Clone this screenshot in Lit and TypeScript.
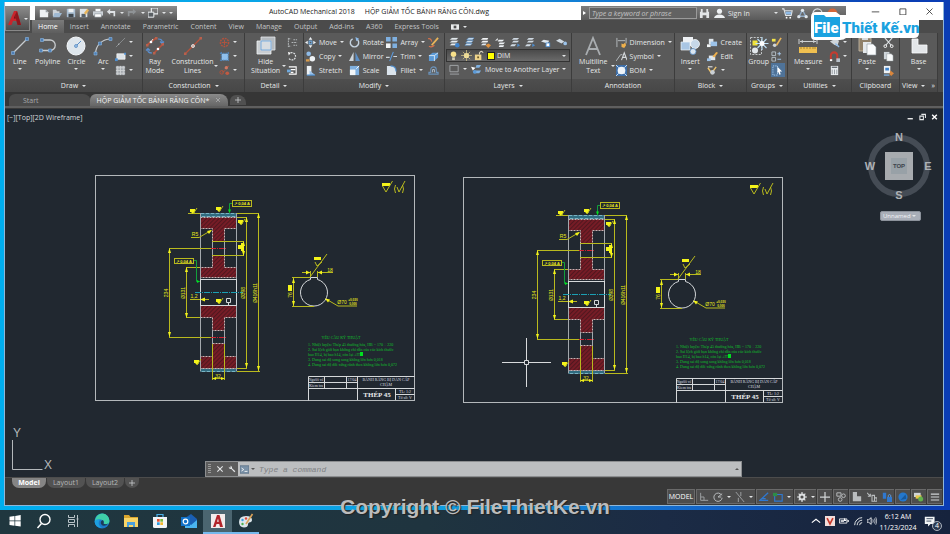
import { LitElement, html, svg, css, nothing, SVGTemplateResult, TemplateResult } from "lit";
import { customElement } from "lit/decorators.js";

const R = "#b5523c";
const B = "#6fa8dc";
const Y = "#f0c050";

/* Glyphs drawn on a 20 x 20 grid */
const big: Record<string, SVGTemplateResult> = {
  line: svg`<path d="M3 17L17 3" stroke="#c9cdd0" stroke-width="1.2"/><path d="M1.500 15.500h3v3h-3zM15.500 1.500h3v3h-3z" fill="#4f7fb5" stroke="#8cb8e4" stroke-width=".6"/>`,
  polyline: svg`<path d="M4 4h8a5 5 0 0 1 0 10.500H3" fill="none" stroke="#c9cdd0" stroke-width="1.300"/><path d="M2.500 2.500h3v3h-3zM1.500 13h3v3h-3zM10.500 13h3v3h-3z" fill="#4f7fb5" stroke="#8cb8e4" stroke-width=".6"/>`,
  circle: svg`<circle cx="10" cy="10" r="9" fill="#dfe6ec" stroke="#f6f8fa"/><path d="M10 10l5-5" stroke="#5b8fc9"/><circle cx="10" cy="10" r="1.500" fill="#9cc3ea" stroke="#3c74b4" stroke-width=".6"/>`,
  arc: svg`<path d="M2.500 17.500C3 9 9 3 18 3" fill="none" stroke="#c9cdd0" stroke-width="1.200"/><path d="M1 16h3v3h-3zM5.500 6h3v3h-3zM16 1.500h3v3h-3z" fill="#4f7fb5" stroke="#8cb8e4" stroke-width=".6"/>`,
  ray: svg`<path d="M2 9L11 2M9 17L18 8" stroke="${R}" stroke-width="1.600"/><path d="M5 7L8 3" stroke="#ddd"/><path d="M13 3q5 0 4 4M15 5.500l2 2 2-2M7 17q-5 0-4-4M1 14.500l2-2 2 2" fill="none" stroke="#5b8fd0" stroke-width="1.200"/><path d="M1 8h2.500v2.500H1zM10 1h2.500v2.500H10zM8 16h2.500v2.500H8zM16.500 7H19v2.500h-2.500z" fill="#b9604c"/><circle cx="6" cy="6" r="1.300" fill="#fff"/><circle cx="13" cy="13" r="1.300" fill="#fff"/>`,
  xline: svg`<path d="M2 18L18 2" stroke="${R}" stroke-width="1.200"/><path d="M1 16.500h2.500V19H1zM16.500 1H19v2.500h-2.500z" fill="#b9604c"/><circle cx="10" cy="10" r="1.500" fill="#c8a39a" stroke="#fff" stroke-width=".7"/>`,
  hide: svg`<path d="M5 1h14v13H5z" fill="#b4babf" stroke="#e6e9eb" stroke-width=".8"/><path d="M1 5h14v13H1z" fill="#dde2e6" fill-opacity=".85" stroke="#f3f5f6" stroke-width=".8"/><path d="M5 5h10v9H5z" fill="none" stroke="#5b9bd8" stroke-width=".8"/>`,
  mtext: svg`<path d="M3 19L10 2l7 17M5.500 13h9" fill="none" stroke="#a9adb0" stroke-width="1.800"/>`,
  insert: svg`<path d="M3 1h10v9H3z" fill="#eef1f4"/><path d="M1 14V6h9v8z" fill="#a9c6e4" stroke="#eef3f8" stroke-width=".7"/><circle cx="15" cy="8" r="4.500" fill="#c6d7e8" stroke="#f4f6f8" stroke-width=".8"/><circle cx="13" cy="15.500" r="3" fill="#dbe6f0" stroke="#5b8fc9" stroke-width=".8"/>`,
  group: svg`<path d="M1.500 1.500h11v17h-11z" fill="none" stroke="#cfd2d4" stroke-width=".9" stroke-dasharray="2 1.200"/><path d="M3.500 4.500h5v5h-5z" fill="#efe33a"/><circle cx="6" cy="14.500" r="3" fill="#e3e8ec"/><path d="M13 1v13M6.500 7.500h13M8.500 3l9 9M17.500 3l-9 9" stroke="#bfe3fa" stroke-width="1.100"/><circle cx="13" cy="7.500" r="2.500" fill="#fff"/>`,
  measure: svg`<path d="M1 11h18v6H1z" fill="${Y}"/><path d="M3 11v2M6 11v2M9 11v2M12 11v2M15 11v2M17 11v2" stroke="#8a6a20" stroke-width=".7"/><path d="M1 3v5M19 3v5M2 5.500h16" stroke="#cdd1d4" stroke-width="1"/><path d="M2 5.500l3-1.500v3zM18 5.500l-3-1.500v3z" fill="#cdd1d4"/>`,
  paste: svg`<path d="M2 2h12v13H2z" fill="#8f8069" stroke="#c9bda8" stroke-width=".8"/><path d="M5 0h6v4H5z" fill="#d6dadd"/><path d="M6 6h8v11H6z" fill="#e4e8eb"/><path d="M10 8h6l3 3v8h-9z" fill="#fbfcfd" stroke="#8c949a" stroke-width=".6"/>`,
  base: svg`<path d="M3 3h6v6h9v8H3z" fill="#e3e6e9" stroke="#fafbfc" stroke-width=".8"/>`,
};

/* Glyphs drawn on a 12 x 12 grid */
const small: Record<string, SVGTemplateResult> = {
  ray1: svg`<path d="M1 11L11 1" stroke="#8b8e90" stroke-width="1"/><circle cx="4" cy="8" r=".8" fill="#b7babc"/>`,
  rect: svg`<path d="M2 3h9v6H2z" fill="#dce2e7" stroke="#fff" stroke-width=".7"/><path d="M0 8h3v3H0z" fill="#4f8fd0"/><path d="M10 2h2v2h-2z" fill="#4f8fd0"/>`,
  hatch: svg`<path d="M1 1h10v10H1z" fill="#a3a8ac"/><path d="M1 3h10M1 6h10M1 9h10M3 1v10M6 1v10M9 1v10" stroke="#d2d5d7" stroke-width=".9"/>`,
  cring: svg`<circle cx="6" cy="6" r="4.500" fill="none" stroke="${R}" stroke-width="1.600" stroke-dasharray="2 1"/><path d="M6 3v6M3 6h6" stroke="${R}"/>`,
  crect: svg`<path d="M3 3h7v7H3z" fill="#8fc0ee"/><path d="M1 2.500h10M1 10h10M2.500 1v10M10 1v10" stroke="#4f8fd0" stroke-width="1" stroke-dasharray="2 1"/>`,
  cdots: svg`<path d="M6 4l5-3M3 8l4-2" stroke="${R}"/><circle cx="8" cy="3" r="1.800" fill="#d07a64"/><circle cx="3" cy="8" r="2" fill="none" stroke="${R}"/><circle cx="9" cy="9" r="2" fill="#c25a42"/>`,
  d1: svg`<path d="M1.500 1v10M1.500 2h3M1.500 10h3M5 6h6M7 3h4M7 9h4" stroke="#b9bdc0" stroke-width="1" stroke-dasharray="2 .8"/>`,
  d2: svg`<path d="M4 2a4 4 0 1 1-2 6" fill="none" stroke="#dfe2e4" stroke-width="1.300" stroke-dasharray="2 1"/><path d="M1 1l3 1-2 3z" fill="#fff"/>`,
  d3: svg`<path d="M2 2h8v8H2M4 5h5M4 8h3" fill="none" stroke="#fff" stroke-width="1.200"/><path d="M0 5h4v3H0z" fill="${B}"/>`,
  move: svg`<path d="M6 0l2 3H4zM6 12l2-3H4zM0 6l3-2v4zM12 6l-3-2v4z" fill="#eef2f5"/><path d="M4.500 4.500h3v3h-3z" fill="none" stroke="${B}" stroke-width="1.200"/>`,
  copy: svg`<circle cx="4" cy="3" r="2.500" fill="#8ebbe8"/><circle cx="8" cy="8.500" r="3" fill="#eef2f5"/><path d="M1 9h4v2.500H1z" fill="#d99c4c"/>`,
  stretch: svg`<path d="M2 1h5v10H2z" fill="#eef2f5"/><path d="M5 6l6 5H5z" fill="#9cc3ea"/><path d="M2 11h9" stroke="#4f8fd0" stroke-width="1.300"/>`,
  rotate: svg`<path d="M4 2a4.600 4.600 0 1 0 4 0" fill="none" stroke="#c5d3e0" stroke-width="1.500"/><path d="M7 0l4 2-3 2.500z" fill="#8ebbe8"/>`,
  mirror: svg`<path d="M5 1v10H0z" fill="#cfd6dc"/><path d="M7 1v10h5z" fill="#5c8fc6"/>`,
  scale: svg`<path d="M1 1h10v10H1z" fill="#7fb0e0"/><path d="M1 5h6v6H1z" fill="#f2f5f7"/><path d="M8 4l3-3" stroke="#fff"/>`,
  array: svg`<path d="M0 0h5v5H0zM7 0h5v5H7zM7 7h5v5H7z" fill="#7fb0e0"/><path d="M0 7h5v5H0z" fill="#f2f5f7"/>`,
  trim: svg`<path d="M0 7h4M8 6h4" stroke="#cfd6dc" stroke-width="1.200"/><path d="M4 11L8 1" stroke="#5c9be0" stroke-width="1.200"/>`,
  fillet: svg`<path d="M1 1h4q6 0 6 6v4H1z" fill="#dbe4ec"/><path d="M5 1q6 0 6 6" fill="none" stroke="#4f8fd0" stroke-width="1.200"/>`,
  erase: svg`<path d="M11 1L4 9" stroke="#e8b45a" stroke-width="2"/><path d="M0 2q3-1 4 3M1 10q3 2 6-1" fill="none" stroke="#d9734a" stroke-width="1.200"/>`,
  box: svg`<path d="M1 5l4-3h6v5l-4 4H1z" fill="#5c9bd8"/><path d="M1 5h6v6M7 5l4-3" fill="none" stroke="#e6f0fa" stroke-width=".9"/>`,
  offset: svg`<path d="M1 10V8h2V5a3 3 0 0 1 6 0v3h2v2z" fill="none" stroke="#6b93bb" stroke-width="1.200"/><path d="M5 8V5h2v3" fill="none" stroke="#b7c5d3"/>`,
  layerA: svg`<path d="M3 1h7l-2 2H1zM3 4h7L8 6H1zM3 7h7L8 9H1z" fill="#eef2f5" stroke="#9aa3aa" stroke-width=".4"/><circle cx="9" cy="9" r="2.500" fill="#3f83cc"/>`,
  layerB: svg`<path d="M5 1h6L9 3H3zM4 4h6L8 6H2zM3 7h6L7 9H1z" fill="#dfe7ee" stroke="#5c9bd8" stroke-width=".6"/>`,
  layerC: svg`<path d="M3 1h6L8 3H1zM3 4h6L8 6H1z" fill="#f1f3f5"/><path d="M3 7h4L6 9H1z" fill="#dfe7ee"/><path d="M6 9l3-2 3 2-3 3z" fill="#e0913c"/>`,
  layerD: svg`<path d="M3 1L0 4l3-.5zM4 3h6L8 5H3zM5 6h6L9 8H4zM5 9h5l-1 2H4z" fill="#eef2f5"/>`,
  layerE: svg`<path d="M4 1h6L8 3H2zM4 4h6L8 6H2zM2 8h5L5 10H0z" fill="#cfd9e2"/><path d="M8 7l3 2-3 2z" fill="#4f8fd0"/>`,
  layerF: svg`<path d="M0 5l3-2 6 1-2 3z" fill="#dfe7ee"/><path d="M5 6h5v5H5z" fill="#4f8fd0"/><path d="M6 7h3v3H6z" fill="#fff"/>`,
  layerG: svg`<path d="M0 4l4-2 5 3-3 2z" fill="#cfd9e2"/><circle cx="10" cy="7" r="2" fill="#9cc3ea"/>`,
  square: svg`<path d="M1 1.500h9v7H1zM1 11h10" fill="none" stroke="#a5a9ac"/>`,
  tolayer: svg`<path d="M0 3l5 1-3 3z" fill="#fff"/><path d="M6 1h5L9 4H5zM5 7h6l-2 3H4z" fill="#7fb0e0"/><circle cx="4" cy="8.500" r="2" fill="#5c9bd8"/>`,
  bulb: svg`<circle cx="6" cy="4.500" r="3" fill="#f8e08a"/><path d="M4.500 8h3v3h-3z" fill="#d4cfb8"/>`,
  sun: svg`<circle cx="6" cy="6" r="2.800" fill="#f6e6a8"/><path d="M6 0v12M0 6h12M2 2l8 8M10 2l-8 8" stroke="#e8d48a" stroke-width=".7"/>`,
  lock: svg`<path d="M1 5h7v6H1z" fill="#eed48c"/><path d="M6 5V3q2-3 4 0" fill="none" stroke="#d6d0bc" stroke-width="1.200"/><path d="M3.500 7h2v2h-2z" fill="#6b5a2c"/>`,
  dim: svg`<path d="M1 1v10M11 1v6M2 4h8" stroke="#b9bec2" stroke-width="1"/><path d="M6 7l2 1 2-2 1 3-2 3-3-1z" fill="#efb04c"/>`,
  sym: svg`<path d="M0 11L5 4h2" fill="none" stroke="#b9bec2"/><path d="M6 10l3-8 3 8M7 7h4" fill="none" stroke="#d6dadd" stroke-width="1.200"/>`,
  bom: svg`<path d="M0 0h12v12H0z" fill="#3d6ea8"/><circle cx="6" cy="6" r="4.200" fill="#eef3f8"/><path d="M0 0l3 3M12 0L9 3M0 12l3-3M12 12L9 9" stroke="#cfe2f5"/>`,
  create: svg`<path d="M2 2h5v6H2z" fill="#dfe6ec"/><path d="M4 5h7v5H4z" fill="#9cc3ea"/><path d="M0 8h4v3H0z" fill="#f2f5f7"/>`,
  edit: svg`<path d="M2 5h7v5H2z" fill="#dfe6ec"/><path d="M0 8h4v3H0z" fill="#9cc3ea"/><path d="M6 6l4-5 2 1-4 5z" fill="#efb04c"/>`,
  attr: svg`<path d="M1 3l4 6 5-7" fill="none" stroke="#efc36a" stroke-width="1.500"/><circle cx="6" cy="8" r="2.500" fill="#c9cfd4"/><path d="M1 2h5" stroke="#fff"/>`,
  g1: svg`<path d="M1 2h4v3H1z" fill="#f2e34a"/><circle cx="4" cy="9" r="2" fill="#cfd5da"/><path d="M11 1L6 9" stroke="#e8b45a" stroke-width="1.800"/>`,
  g2: svg`<path d="M1 1h4v4H1zM1 7h4v4H1z" fill="none" stroke="#b8c2cb"/><path d="M7 3h4M9 1v4M7 9h4" stroke="#a9cdf0"/>`,
  g3: svg`<path d="M1 1h5v10H1z" fill="none" stroke="#a9cdf0" stroke-dasharray="1.500 1"/><path d="M6 2l5 5H8.500l1 3-1.500.5-1-3L6 9z" fill="#fff"/>`,
  util1: svg`<path d="M1 5l6-3 4 2-2 6-4-2z" fill="#cfd5da"/><path d="M7 7l4 4" stroke="#8ebbe8" stroke-width="1.500"/>`,
  magnet: svg`<path d="M2 9V5a3.500 3.500 0 0 1 7 0v5" fill="none" stroke="#c23c30" stroke-width="2.200"/><path d="M1 9h2.500v2H1z" fill="#fff"/><path d="M8 8h4v4H8z" fill="#b8c2cb"/>`,
  calc: svg`<path d="M2 1h8v10H2z" fill="#e8ecef"/><path d="M3 2.500h6" stroke="#6b7278" stroke-width="1.500"/><path d="M3.500 5v5M6 5v5M8.500 5v5" stroke="#7d848a" stroke-width=".8"/>`,
  cut: svg`<path d="M2 1l7 8M10 1L3 9" stroke="#dfe3e6" stroke-width="1.200"/><circle cx="2.500" cy="10" r="1.500" fill="none" stroke="#fff"/><circle cx="9.500" cy="10" r="1.500" fill="none" stroke="#fff"/>`,
  copyc: svg`<path d="M1 1h6v8H1z" fill="#cfd5da"/><path d="M4 3h5l2 2v6H4z" fill="#f7f9fa" stroke="#858c92" stroke-width=".5"/>`,
  match: svg`<path d="M1 1h7v8H1z" fill="#eef2f5"/><path d="M2.500 3h4v3h-4z" fill="#3f83cc"/><path d="M1 11h6" stroke="#7fb0e0" stroke-width="1.500"/><path d="M8 6l4 3-3 3-2-2z" fill="#d9863c"/>`,
  newf: svg`<path d="M1 2h7l3 3v6H1z" fill="#eef1f3"/><path d="M8 2v3h3" fill="#9aa2a8"/>`,
  open: svg`<path d="M1 2h4l1 2h3v6H1z" fill="#cdd3d8"/><path d="M3 6h9l-3 5H1z" fill="#9fb9d2"/>`,
  save: svg`<path d="M1 1h10v10H1z" fill="#a9bed2"/><path d="M3 1h6v4H3z" fill="#eef1f3"/><path d="M3 7h6v4H3z" fill="#41484e"/>`,
  saveas: svg`<path d="M1 1h9v10H1z" fill="#dfe4e8"/><path d="M3 7h5v4H3z" fill="#59626a"/><path d="M6 6l4-5 2 2-4 5z" fill="#e8b45a"/>`,
  print: svg`<path d="M3 1h6v3H3z" fill="#f7f9fa"/><path d="M0 4h12v5H0z" fill="#cdd3d8"/><path d="M2 7h8v4H2z" fill="#fff" stroke="#7b8288" stroke-width=".6"/>`,
  undo: svg`<path d="M5 1L1 4.500 5 8V6h4v4h2V3.500H5z" fill="#dfe3e6"/>`,
  redo: svg`<path d="M7 1l4 3.500L7 8V6H3v4H1V3.500h6z" fill="#8f9396"/>`,
  pages: svg`<path d="M4 0h8v7H4z" fill="none" stroke="#eceff1" stroke-width="1.400"/><path d="M0 5h7v6H0z" fill="#5a5f63" stroke="#eceff1" stroke-width="1.200"/>`,
  binoc: svg`<path d="M1 4h3v7H1zM8 4h3v7H8zM2 1h2v3H2zM8 1h2v3H8zM4 5h4v3H4z" fill="#e3e6e8"/>`,
  user: svg`<circle cx="6" cy="3.500" r="2.800" fill="#eef1f3"/><path d="M0 11q1-4 6-4t6 4z" fill="#eef1f3"/>`,
  cart: svg`<path d="M0 1h2l2 7h6l1-5H3" fill="none" stroke="#dfe3e6" stroke-width="1.300"/><path d="M4 4h6v3H4z" fill="#8ebbe8"/><circle cx="5" cy="10.500" r="1" fill="#fff"/><circle cx="9" cy="10.500" r="1" fill="#fff"/>`,
  exch: svg`<path d="M6 2L2 10M6 2l4 8M3 9h6" stroke="#8fa9c4" stroke-width="1.500"/><circle cx="6" cy="2.500" r="1.800" fill="#dfe6ec"/><circle cx="2" cy="9.500" r="1.800" fill="#dfe6ec"/><circle cx="10" cy="9.500" r="1.800" fill="#dfe6ec"/>`,
  help: svg`<circle cx="6" cy="6" r="5" fill="none" stroke="#dfe3e6" stroke-width="1.200"/>`,
  alert: svg`<circle cx="6" cy="6" r="5.500" fill="#d4673a"/>`,
  camera: svg`<path d="M0 2h12v8H0z" fill="#e9ebec"/><path d="M4 4h4v4H4z" fill="#4d4d4d"/>`,
  wmin: svg`<path d="M1 6.500h10" stroke="#222"/>`,
  wmax: svg`<path d="M2.500 2.500h8v8h-8z" fill="none" stroke="#222"/>`,
  wclose: svg`<path d="M2 2l8 8M10 2l-8 8" stroke="#222"/>`,
  dmin: svg`<path d="M1 9h9" stroke="#fff" stroke-width="2.200"/>`,
  drest: svg`<path d="M4 1.500h7v6M1.500 4.500h6v6h-6z" fill="none" stroke="#e8eaec" stroke-width="1.800"/>`,
  dclose: svg`<path d="M2 2l8 8M10 2l-8 8" stroke="#fff" stroke-width="2.400"/>`,
  x: svg`<path d="M2 2l8 8M10 2l-8 8" stroke="#e4e6e8" stroke-width="1.600"/>`,
  wrench: svg`<path d="M1 2.500q0 4 4 3.500l4.500 5 1.500-1.500L6 5Q6.500 1 3 1l1.500 2L3 4z" fill="#e4e6e8"/>`,
  prompt: svg`<path d="M0 1h12v10H0z" fill="#7b92a8" stroke="#5a6f84"/><path d="M2 4l3 2-3 2M6 8.500h4" fill="none" stroke="#fff" stroke-width="1.100"/>`,
  snapL: svg`<path d="M2 1v9h9M2 6h4v4" fill="none" stroke="#9b9ea0" stroke-width="1.200"/>`,
  polar: svg`<path d="M10.500 4A5 5 0 1 0 11 7M6 6l5-4M6 6h4" fill="none" stroke="#b5b8ba" stroke-width="1.200"/>`,
  iso: svg`<path d="M1 0l10 12M7 0v5M4 7v5" stroke="#9b9ea0" stroke-width="1.200"/>`,
  angle: svg`<path d="M11 1L1 10h10M3 8h5" fill="none" stroke="#2f78d0" stroke-width="1.500"/>`,
  osnap: svg`<path d="M2 3h9v8H2z" fill="none" stroke="#2f78d0" stroke-width="1.400"/><path d="M0 1h5v4H0z" fill="#2d8c46"/>`,
  gear: svg`<circle cx="6" cy="6" r="3" fill="none" stroke="#dcdfe1" stroke-width="2.200"/><path d="M6 0v3M6 9v3M0 6h3M9 6h3M2 2l2 2M8 8l2 2M10 2L8 4M4 8l-2 2" stroke="#dcdfe1" stroke-width="1.400"/>`,
  plus: svg`<path d="M6 0v12M0 6h12" stroke="#d0d3d5" stroke-width="1.500"/>`,
  iso2: svg`<path d="M1 1h5v4H1z" fill="none" stroke="#b5b8ba" stroke-width="1.200"/><circle cx="9" cy="4.500" r="2.200" fill="none" stroke="#b5b8ba" stroke-width="1.200"/><circle cx="5" cy="9" r="2.200" fill="none" stroke="#b5b8ba" stroke-width="1.200"/>`,
  blocks: svg`<path d="M1 0h5v11H1zM6 5h5v6H6z" fill="#b9bcbe"/>`,
  blocks2: svg`<path d="M0 1l4 4M4 2v3H1M6 4h3v7H6zM9 7h3v4H9z" fill="none" stroke="#b9bcbe" stroke-width="1.300"/>`,
  lockb: svg`<path d="M1 1h4v7H1zM6 6h6v6H6z" fill="#2f78d0"/><path d="M7.500 6V4q1.500-2 3 0v2" fill="none" stroke="#5c9be0" stroke-width="1.200"/>`,
  perf: svg`<circle cx="6" cy="6" r="5.500" fill="#2477cc"/><path d="M3 9.500L9 3l1 5z" fill="#17589c"/>`,
  hw: svg`<path d="M0 1h8v5H0z" fill="#cfd3d6"/><path d="M2 4h7v4H2z" fill="#e8c84a"/><circle cx="8" cy="8.500" r="3" fill="#62b04c"/>`,
  menu: svg`<path d="M1 2.500h10M1 6h10M1 9.500h10" stroke="#d0d3d5" stroke-width="1.300"/>`,
  up: svg`<path d="M1 8l5-4 5 4" fill="none" stroke="#fff" stroke-width="1.400"/>`,
  vkey: svg`<path d="M0 0h12v12H0z" fill="#f2dedb"/><path d="M2.500 2.500L6 9.500l3.500-7" fill="none" stroke="#c8392c" stroke-width="2"/>`,
  batt: svg`<path d="M.5 3.500h9v5h-9z" fill="none" stroke="#fff"/><path d="M2 5h4v2H2zM10 5h2v2h-2z" fill="#fff"/><path d="M6 2l3 4H6z" fill="#fff"/>`,
  wifi: svg`<path d="M2 11a9 9 0 0 1 9-9M5 11a6 6 0 0 1 6-6M8 11a3 3 0 0 1 3-3" fill="none" stroke="#dfe3e6" stroke-width="1.200"/>`,
  vol: svg`<path d="M0 4.500h2L5 2v8L2 7.500H0z" fill="none" stroke="#fff"/><path d="M7 4q1 2 0 4M9 3q1.500 3 0 6M10.500 1.500q2.500 4.500 0 9" fill="none" stroke="#fff" stroke-width=".8"/>`,
};

/* Glyphs drawn on a 16 x 16 grid, for the system bar */
const task: Record<string, SVGTemplateResult> = {
  start: svg`<path d="M2.500 3.700l5-.7v4.500h-5zM8.200 2.900l5.500-.8v5.400H8.200zM2.500 8.200h5v4.500l-5-.7zM8.200 8.200h5.500v5.400l-5.500-.8z" fill="#fff"/>`,
  search: svg`<circle cx="9" cy="6.500" r="5" fill="none" stroke="#fff" stroke-width="1.400"/><path d="M5.500 10.500L1.500 15" stroke="#fff" stroke-width="1.500"/>`,
  tview: svg`<path d="M3.500 2v2.500h6V2M3.500 14v-2.500h6V14M3.500 6.500h6v3h-6zM12.500 2v12M11.500 6h2" fill="none" stroke="#b9c3c8"/>`,
  edge: svg`<circle cx="8" cy="8" r="7.500" fill="#1b78c8"/><path d="M1 7a7.200 7.200 0 0 1 14.400 1.500c0 3-4.500 3.500-6 2 1.500-2-1-4.500-4-4Q2.500 6.500 1 9z" fill="#3fd0a8"/><path d="M6 6.500q-3.500 5 2 8.500Q1 15 .6 8.500 2 5.500 6 6.500z" fill="#1d9fe0"/><path d="M9 7q1.500 2 .4 3.500 2 1.500 5-.2Q10 15 7 11q-1-3 2-4z" fill="#1d3b58"/>`,
  folder: svg`<path d="M1 2h5l1.500 2H15v3H1z" fill="#d9a62e"/><path d="M1 5h14v9H1z" fill="#f8d567"/><path d="M4 9h8v5h-2v-2H6v2H4z" fill="#4aa0dc"/>`,
  store: svg`<path d="M5 4V1.500h6V4" fill="none" stroke="#49b0e8" stroke-width="1.200"/><path d="M1 4h14v9.500q0 1.500-1.500 1.500h-11Q1 15 1 13.500z" fill="#f2f5f7"/><path d="M5 6h2.700v2.700H5z" fill="#e8502e"/><path d="M8.300 6H11v2.700H8.300z" fill="#7cb83c"/><path d="M5 9.300h2.700V12H5z" fill="#2f9de0"/><path d="M8.300 9.300H11V12H8.300z" fill="#f5b92e"/>`,
  outlook: svg`<path d="M4 5l6-4 6 5v8H4z" fill="#1a5fb4"/><path d="M4 8l6 4 6-5v8H4z" fill="#4ab4f0"/><path d="M0 4h9v9H0z" fill="#1272c8"/><circle cx="4.500" cy="8.500" r="2.300" fill="none" stroke="#fff" stroke-width="1.200"/>`,
  acad: svg`<path d="M1 1h14v14H1z" fill="#f3ecec"/><path d="M3 14L7 2h2.500L13 14h-3l-.8-3H6.500l-1 3zM7 8.700h1.800L8 5.500z" fill="#b3242a"/>`,
  paint: svg`<path d="M1 9q0-6 7-6 6 0 6 4 0 2-3 2.500-1 .5-1 2 0 3-4 3-5-.5-5-5.500z" fill="#dbe5ea"/><circle cx="4.500" cy="7" r="1.200" fill="#3a9de0"/><circle cx="8" cy="5.500" r="1.200" fill="#e04a3a"/><circle cx="4.500" cy="11" r="1.200" fill="#4cb050"/><path d="M14.500 1L8 11" stroke="#d9a25a" stroke-width="1.600"/>`,
  note: svg`<path d="M1 2h12v9H8l-3 3v-3H1z" fill="#f2f5f7"/><path d="M3 4.500h8M3 7.500h6" stroke="#25354c"/>`,
};

const ico = (n: string) => html`<svg class="i12" viewBox="0 0 12 12" aria-hidden="true">${small[n]}</svg>`;
const bigIco = (n: string) => html`<svg class="i20" viewBox="0 0 20 20" aria-hidden="true">${big[n]}</svg>`;
const taskIco = (n: string) => html`<svg class="i16" viewBox="0 0 16 16" aria-hidden="true">${task[n]}</svg>`;
const caret = html`<i class="caret"></i>`;

/* Large ribbon button. Side puts the arrow beside the second line. */
const bigBtn = (icon: string, lines: string[], arrow: "under" | "side" | "none" = "under") => html`
  <button class="big">
    ${bigIco(icon)}
    ${lines.map((l) => html`<span>${l}</span>`)}
    ${arrow === "under" ? caret : nothing}
    ${arrow === "side" ? html`<i class="caret side"></i>` : nothing}
  </button>`;

const smallBtn = (icon: string, label = "", arrow = false, on = false) => html`
  <button class="small ${on ? "on" : ""}" aria-label=${label || icon}>
    ${ico(icon)}${label ? html`<span>${label}</span>` : nothing}${arrow ? caret : nothing}
  </button>`;

const stack = (...rows: TemplateResult[]) => html`<div class="stack">${rows}</div>`;

const panel = (cls: string, title: string, body: unknown, arrow = true, more = false) => html`
  <section class="panel ${cls}">
    <div class="body">${body}</div>
    <button class="ptitle">${title}${arrow ? caret : nothing}${more ? html`<span class="more">»</span>` : nothing}</button>
  </section>`;

/* One drawing sheet: gear section, bore view, notes and title block */
@customElement("cad-sheet")
export class CadSheet extends LitElement {
  static styles = css`
    :host { display: block; }
    svg { display: block; width: 322px; height: 228px; }
    text { font-family: "Liberation Serif", serif; font-size: 4px; }
    .frame { fill: none; stroke: #b4b8bb; stroke-width: 1; }
    .w { fill: none; stroke: #d5d8da; stroke-width: 1; }
    .edge { fill: none; stroke: #a3a8ad; stroke-width: 1; }
    .dash { fill: url(#hatch); stroke: #c9b5b5; stroke-width: 1; stroke-dasharray: 2 1; }
    .y { fill: none; stroke: #b9ba1e; stroke-width: 1; }
    .yf { fill: #f4f41a; }
    .g { fill: none; stroke: #12a03c; stroke-width: 1; }
    .gf { fill: #00e020; }
    .c { fill: none; stroke: #1ba0b4; stroke-width: 1; stroke-dasharray: 6 1 1 1; }
    .r { fill: none; stroke: #d02030; stroke-width: 1; stroke-dasharray: 5 1 1 1; }
    .teal { fill: #2f6c80; stroke: #79b4c4; stroke-width: 1; stroke-dasharray: 4 1; }
    .yt { fill: #e8e81c; font-family: "Liberation Sans", sans-serif; text-anchor: middle; font-size: 5px; }
    .tiny { font-size: 3px; font-weight: bold; }
    .box { font-size: 4px; font-weight: bold; }
    .note { fill: #10c02c; }
    .mid { text-anchor: middle; }
    .wt { fill: #dcdfe1; text-anchor: middle; }
    .mat { font-size: 7px; font-weight: bold; fill: #e8eaec; }
  `;

  private rough(x: number, y: number) {
    return svg`<path class="yf" d="M${x - 3} ${y - 2}h5v3l-2 2-2-2h-1z"/><path class="y" d="M${x} ${y + 3}l4-6"/>`;
  }
  private vdim(x: number, a: number, b: number) {
    return svg`<path class="y" d="M${x} ${a}V${b}"/><path class="yf" d="M${x} ${a}l-1.500 5h3zM${x} ${b}l-1.500-5h3z"/>`;
  }
  private vtext(x: number, y: number, t: string) {
    return svg`<text class="yt" transform="translate(${x} ${y}) rotate(-90)">${t}</text>`;
  }

  render() {
    return html`<svg viewBox="94 174 322 228" role="img" aria-label="BÁNH RĂNG BỊ DẪN CẤP CHẬM">
      <defs>
        <pattern id="hatch" width="3" height="3" patternUnits="userSpaceOnUse" patternTransform="rotate(45)">
          <rect width="3" height="3" fill="#761c26"></rect><rect width="1" height="3" fill="#50171f"></rect>
        </pattern>
      </defs>
      <rect class="frame" x="95.500" y="175.500" width="319" height="225"></rect>

      <rect class="teal" x="200.500" y="213.500" width="36" height="3"></rect>
      <rect class="teal" x="200.500" y="368.500" width="36" height="3"></rect>
      <path class="dash" d="M200.500 217.500h36v11h-12v13h-12v-13h-12z"></path>
      <path class="dash" d="M212.500 255.500h12v12h12v10h-36v-10h12z"></path>
      <path class="dash" d="M200.500 305.500h36v12h-12v13h-12v-13h-12z"></path>
      <path class="dash" d="M212.500 343.500h12v13h12v12h-36v-12h12z"></path>
      <path class="edge" d="M200.500 213v158M236.500 213v158M212.500 241v15M224.500 241v15M212.500 330v14M224.500 330v14"></path>
      <rect class="w" x="200.500" y="279.500" width="36" height="26"></rect>
      <path class="r" d="M211 248.500h16M211 337.500h16"></path>
      <path class="c" d="M195 292.500h48"></path>

      <path class="y" d="M169 248.500h42M169 337.500h42M186 267.500h14M186 317.500h14M212 241.500h32M212 255.500h32M237 213.500h22M237 217.500h10M237 368.500h10M237 371.500h23M212.500 344v36M224.500 344v36M212 378.500h12M188 213.500h12"></path>
      ${this.vdim(169.5, 248, 337)} ${this.vdim(186.5, 267, 318)} ${this.vdim(246.5, 217, 368)}
      ${this.vdim(258.5, 213, 371)} ${this.vdim(243.5, 241, 256)}
      ${this.vtext(168, 293, "234")} ${this.vtext(185, 293, "Ø131")} ${this.vtext(245, 293, "Ø398")} ${this.vtext(257, 293, "Ø416h11")}
      <text class="yt" x="218" y="378">32</text>
      <text class="yt" x="195" y="236">R5</text>
      <path class="y" d="M191 237.500h8l12-7"></path><path class="yf" d="M212 230l-5 1 2 3z"></path>
      <path class="yf" d="M238 245h3v-2h3v8h-3v-2h-3z"></path>
      <path class="yf" d="M212 378.500l4-1.500v3zM225 378.500l-4-1.500v3z"></path>
      <path class="y" d="M190 299.500h10M203 299.500h6"></path><path class="yf" d="M200 299.500l5-2v4z"></path>
      <text class="yt" x="194" y="298">1,2</text>

      ${this.rough(193, 211)} ${this.rough(219, 209)} ${this.rough(241, 222)} ${this.rough(219, 301)} ${this.rough(197, 362)}
      <path class="w" d="M226.500 298.500h4v4h-4zM228.500 303v2M226 305.500h5"></path>

      <rect class="y" x="232.500" y="200.500" width="19" height="6"></rect>
      <rect class="y" x="174.500" y="258.500" width="19" height="5"></rect>
      <text class="yt box" x="242" y="205">↗ 0,04 A</text>
      <text class="yt box" x="184" y="263">↗ 0,04 A</text>
      <path class="g" d="M232 203.500h-2.500v8M194 260.500h2.500v21h3"></path>
      <path class="gf" d="M229.500 213.500l-1.500-4h3zM200 281.500l-3-1.500v3z"></path>

      <path class="w" d="M310.500 279.500v-2h7v2A13.500 13.500 0 1 1 310.500 279.500"></path>
      ${this.vdim(293.5, 278, 306)}
      ${this.vtext(292, 295, "76")}
      <path class="yf" d="M288 285h4v6h-4z"></path>
      <path class="y" d="M292 277.500h18M292 306.500h22M302 272.500h8M318 272.500h15M310.500 271v6M317.500 271v6M310 277l17-23M315 262l2 4 5-4M326 299l12 7h19"></path>
      <path class="yf" d="M310 272.500l-4-2v4zM318 272.500l4-2v4zM325 298.500l5 1-2 3zM314 257h7v3h-7z"></path>
      <text class="yt" x="330" y="272">18</text>
      <text class="yt" x="342" y="304">Ø70</text>
      <text class="yt tiny" x="353" y="301">+0,030</text>
      <text class="yt tiny" x="353" y="305">0,000</text>

      <path class="yf" d="M382 183h8v3h-8z"></path>
      <path class="y" d="M382.500 186l3.500 6 6.500-11M395.500 185q-2 4 0 8M397 187l2 5 6-11M402.500 185q2 4 0 8"></path>

      <text class="note mid" x="341" y="339">YÊU CẦU KỸ THUẬT</text>
      <g class="note">
        <text x="308" y="346">1. Nhiệt luyện: Thép 45 thường hóa, HB = 170 ÷ 220</text>
        <text x="308" y="351">2. Sai lệch giới hạn không chỉ dẫn của các kích thước</text>
        <text x="308" y="356">bao H14, bị bao h14, còn lại ±IT</text>
        <text x="308" y="361">3. Dung sai độ song song không lớn hơn 0,018</text>
        <text x="308" y="366">4. Dung sai độ đối xứng rãnh then không lớn hơn 0,072</text>
      </g>
      <path class="gf" d="M360 352h3v4h-3z"></path>

      <path class="w" d="M308.500 400.500v-24h106M308.500 382.500h49M308.500 388.500h106M324.500 376v12M346.500 376v12M357.500 376v24M395.500 388v12M395.500 394.500h19"></path>
      <text class="wt" x="316" y="381">Người vẽ</text>
      <text class="wt" x="316" y="387">Kiểm tra</text>
      <text class="wt" x="352" y="381">17/04</text>
      <text class="wt" x="386" y="381">BÁNH RĂNG BỊ DẪN CẤP</text>
      <text class="wt" x="386" y="386">CHẬM</text>
      <text class="wt mat" x="377" y="397">THÉP 45</text>
      <text class="wt" x="405" y="393">TL: 1:2</text>
      <text class="wt" x="405" y="399">Tờ số: V</text>
    </svg>`;
  }
}

@customElement("app-root")
export class AppRoot extends LitElement {
  static styles = css`
    :host {
      display: flex; flex-direction: column; min-height: 100vh; position: relative; overflow: hidden;
      background: linear-gradient(to right, #00aeef, #0f9fe2 45%, #1470cf 68%, #0a3db4 96%);
      font-family: "Open Sans", "Noto Sans", sans-serif; font-size: 7px; line-height: 9px; color: #e6e8e9;
    }
    * { box-sizing: border-box; }
    button { font: inherit; color: inherit; background: none; border: 0; padding: 0; margin: 0; white-space: nowrap; }
    svg { display: block; flex: none; }
    .i12 { width: 11px; height: 11px; }
    .i20 { width: 20px; height: 20px; }
    .i16 { width: 16px; height: 16px; }
    .caret { display: block; flex: none; width: 0; height: 0; border: 2px solid transparent; border-top: 2px solid #e2e4e5; border-bottom: 0; }

    .window { flex: 1; display: flex; flex-direction: column; margin: 2px 6px 4px 4px; border: solid #8fb6d8; border-width: 0 1px 1px; background: #383838; }

    .head { display: grid; grid-template-columns: 25px 1fr; grid-template-rows: 18px 13px; background: linear-gradient(#fff 18px, #4b4b4b 18px); }
    .app { grid-row: 1 / 3; margin: 4px 0 2px; border: 1px solid #888; background: linear-gradient(#8a8a8a, #4d4d4d); display: flex; align-items: center; justify-content: center; gap: 1px; }
    .titlebar { display: flex; align-items: stretch; }
    .qat { margin: 4px 0 0 5px; width: 142px; padding: 0 4px; display: flex; align-items: center; justify-content: space-between; background: linear-gradient(#8d8d8d, #565656); }
    .qat .i12 { width: 10px; height: 10px; }
    .title { flex: 1; margin: 0; display: flex; align-items: center; justify-content: center; gap: 10px; font-size: 7px; font-weight: 400; color: #222; white-space: nowrap; }
    .info { margin: 4px 0 0; width: 265px; display: flex; align-items: center; gap: 2px; background: linear-gradient(#7d7d7d, #5a5a5a); }
    .info .go { flex: none; width: 6px; display: flex; justify-content: center; }
    .rt { border: 2px solid transparent; border-left: 3px solid #fff; border-right: 0; }
    .info input { flex: none; width: 108px; height: 12px; border: 1px solid #9a9a9a; background: #626262; padding: 0 2px; font: italic 7px "Open Sans", sans-serif; color: #ccc; }
    .info input::placeholder { color: #c4c4c4; opacity: 1; }
    .info .acct { display: flex; gap: 3px; align-items: center; margin-right: 22px; }
    .info .caret { margin-right: 2px; }
    .info .small { margin-right: 2px; }
    .wctl { display: flex; margin-left: 16px; align-items: center; }
    .wctl button { width: 27px; height: 16px; display: grid; place-items: center; }
    .wctl svg { width: 9px; height: 9px; }
    .tabs { display: flex; align-items: stretch; padding-left: 2px; color: #c3c5c6; }
    .tabs button { padding: 0 6px; }
    .tabs .on { background: linear-gradient(#7a7a7a, #5e5e5e); color: #fff; }
    .tabs .cam { display: flex; align-items: center; gap: 4px; }
    .cam svg { width: 8px; height: 8px; }

    .ribbon { display: grid; grid-template-columns: 138fr 102fr 59fr 141fr 127fr 103fr 72fr 41fr 64fr 48fr 38fr 5fr; height: 59px; background: #4a4a4a; }
    .panel { display: flex; flex-direction: column; min-width: 0; border-right: 1px solid #3c3c3c; background: #5a5a5a; }
    .body { flex: 1; display: grid; align-items: start; padding-top: 2px; }
    .ptitle { height: 13px; display: flex; align-items: center; justify-content: center; gap: 4px; background: linear-gradient(#4e4e4e, #474747); }
    .more { margin-left: 2px; }
    .draw .body { grid-template-columns: 30fr 26fr 32fr 22fr 28fr; }
    .cons .body { grid-template-columns: 24fr 52fr 26fr; }
    .detail .body { grid-template-columns: 42fr 17fr; }
    .modify .body { grid-template-columns: 44fr 38fr 42fr 17fr; }
    .layers .body { display: block; padding: 2px 1px 0; }
    .anno .body { grid-template-columns: 43fr 60fr; }
    .block .body { grid-template-columns: 31fr 41fr; }
    .groups .body { grid-template-columns: 24fr 17fr; }
    .utils .body { grid-template-columns: 41fr 23fr; }
    .clip .body { grid-template-columns: 30fr 17fr; }
    .view .body { grid-template-columns: 1fr; }
    .big { display: flex; flex-direction: column; align-items: center; position: relative; padding-top: 1px; min-width: 0; }
    .big svg { margin-bottom: 1px; }
    .big .caret { margin-top: 2px; }
    .big .side { position: absolute; right: 0; bottom: 8px; }
    .stack { display: grid; grid-auto-rows: 14px; padding-left: 1px; }
    .small { display: flex; align-items: center; gap: 3px; }
    .on.small { background: #4f7399; width: 14px; padding-left: 1px; }
    .lrow { display: flex; align-items: center; height: 14px; justify-content: space-between; padding: 0 3px; }
    .left { justify-content: flex-start; gap: 4px; }
    .combo { position: relative; display: flex; align-items: center; gap: 2px; height: 13px; padding-left: 1px; border: 1px solid #333; background: linear-gradient(#4a4a4a, #6a6a6a); }
    .swatch { width: 8px; height: 8px; background: #ff0; border: 1px solid #222; }
    .combo select { flex: 1; appearance: none; border: 0; background: none; font: inherit; color: inherit; padding: 0; }
    .combo .caret { margin-right: 3px; }

    .files { display: flex; height: 14px; padding: 2px 0 0 4px; background: #363636; }
    .files button { border-radius: 6px 8px 0 0; }
    .files .a { width: 82px; text-align: left; padding-left: 14px; background: #4b4b4b; color: #a8aaab; }
    .files .b { width: 138px; margin-left: -1px; display: flex; align-items: center; justify-content: center; gap: 6px; padding: 0 4px; background: linear-gradient(#8a8a8a, #666); color: #f2f2f2; font-size: 7px; }
    .files .b svg { width: 6px; height: 6px; opacity: .5; }
    .files .p { width: 16px; height: 10px; display: grid; place-items: center; background: #505050; margin: 1px 0 0 2px; }
    .files .p svg, .layouts .p svg { width: 6px; height: 6px; }
    .rule { height: 3px; background: #5f5f5f; border-bottom: 1px solid #3a3a3a; }

    .canvas { flex: 1; min-height: 368px; position: relative; background: #212830; overflow: hidden; }
    .vp { position: absolute; left: 2px; top: 4px; color: #d5d8da; font-size: 7px; }
    .dctl { position: absolute; right: 5px; top: 4px; display: flex; gap: 5px; }
    .dctl svg { width: 7px; height: 8px; }
    .s1 { position: absolute; left: 89px; top: 65px; }
    .s2 { position: absolute; left: 457px; top: 67px; }
    .cross { position: absolute; left: 497px; top: 229px; width: 49px; height: 49px; }
    .ucs { position: absolute; left: 0; bottom: 0; width: 56px; height: 54px; }
    .ucs text { font: 12px "Liberation Sans", sans-serif; fill: #b4b8bb; }
    .cube { position: absolute; right: 8px; top: 20px; width: 72px; height: 74px; }
    .cube text { font: bold 11px "Liberation Sans", sans-serif; fill: #aeb2b5; text-anchor: middle; }
    .cube .top { font-size: 6px; fill: #3d444b; }
    .ucsname { position: absolute; right: 22px; top: 102px; width: 41px; height: 10px; border: 1px solid #8c929b; border-radius: 2px; background: #a9aeb8; color: #f2f3f5; font-size: 6px; line-height: 8px; display: flex; align-items: center; justify-content: space-between; padding: 0 4px 0 2px; }
    .cmd { position: absolute; left: 200px; right: 201px; bottom: 0; height: 16px; display: flex; align-items: center; background: #bcbec0; border: 1px solid #8c8e90; color: #333; }
    .tools { align-self: stretch; width: 32px; display: flex; align-items: center; justify-content: space-between; padding: 0 2px; background: #5c5c5c; }
    .grip { width: 3px; height: 10px; background: repeating-linear-gradient(#999 0 1px, transparent 1px 2px); }
    .tools svg { width: 8px; height: 8px; }
    .cmd > svg { margin: 0 2px; width: 9px; height: 9px; }
    .cmd .caret { border-top-color: #555; }
    .cmd input { flex: 1; border: 0; background: none; padding: 0 4px; font: italic 8px "Liberation Mono", monospace; color: #555; }
    .cmd input::placeholder { color: #808284; opacity: 1; }
    .flip { transform: rotate(180deg); margin-right: 2px; }

    .layouts { display: flex; height: 11px; padding-left: 7px; gap: 1px; border-top: 1px solid #4c4c4c; }
    .layouts button { width: 38px; height: 10px; border-radius: 0 0 7px 7px; background: #525252; color: #b6b8b9; line-height: 10px; }
    .layouts .on { width: 34px; background: #858585; color: #fff; font-weight: 700; }
    .layouts .p { width: 14px; display: grid; place-items: center; }
    .status { display: flex; justify-content: flex-end; height: 17px; padding: 1px 1px 1px 0; }
    .status button { display: flex; align-items: center; justify-content: center; gap: 4px; width: 15px; border: solid #6a6a6a; border-width: 1px 0; background: #4d4d4d; }
    .status .l { border-left-width: 1px; margin-left: 1px; }
    .status .wide { width: 22px; }
    .status .model { width: 28px; color: #fff; border-width: 1px; }
    .status svg { width: 10px; height: 10px; }

    .taskbar { display: flex; align-items: stretch; height: 24px; background: linear-gradient(to right, #20373f, #1f343f 45%, #1b2b45 70%, #16233d); font-size: 7px; color: #fff; }
    .taskbar button { width: 29px; display: grid; place-items: center; border-bottom: 2px solid transparent; }
    .taskbar .act { background: #4b6570; border-color: #76b9ed; }
    .taskbar .run { border-color: #76b9ed; width: 27px; }
    .tray { margin-left: auto; display: flex; align-items: stretch; }
    .taskbar .ti { width: 14px; }
    .tray .i12 { width: 10px; height: 10px; }
    .clock { width: 38px; display: flex; flex-direction: column; align-items: center; justify-content: center; line-height: 11px; white-space: nowrap; }
    .taskbar .note { width: 27px; position: relative; margin-right: 6px; }
    .note svg { width: 13px; height: 13px; }
    .badge { position: absolute; right: 2px; bottom: 1px; width: 10px; height: 10px; border-radius: 50%; border: 1px solid #aab2bc; background: #2b3950; line-height: 8px; text-align: center; }

    .mark { position: absolute; left: 0; right: 0; bottom: 15px; text-align: center; font: bold 21px/24px "Liberation Sans", sans-serif; color: #bcbcbc; text-shadow: 1px 1px 1px #222; }
    .logo { position: absolute; right: 29px; top: 11px; width: 111px; height: 30px; }
    .logo text { font-family: Roboto, "Liberation Sans", sans-serif; font-weight: 900; font-size: 15px; }
  `;

  private tabs = ["Home", "Insert", "Annotate", "Parametric", "Content", "View", "Manage", "Output", "Add-ins", "A360", "Express Tools"];

  private renderRibbon() {
    return html`<div class="ribbon">
      ${panel("draw", "Draw", html`
        ${bigBtn("line", ["Line"])} ${bigBtn("polyline", ["Polyline"], "none")} ${bigBtn("circle", ["Circle"])} ${bigBtn("arc", ["Arc"])}
        ${stack(smallBtn("ray1", "", true), smallBtn("rect", "", true), smallBtn("hatch", "", true))}`)}
      ${panel("cons", "Construction", html`
        ${bigBtn("ray", ["Ray", "Mode"], "none")} ${bigBtn("xline", ["Construction", "Lines"], "side")}
        ${stack(smallBtn("cring", "", true), smallBtn("crect", "", true), smallBtn("cdots", "", true))}`)}
      ${panel("detail", "Detail", html`
        ${bigBtn("hide", ["Hide", "Situation"], "side")}
        ${stack(smallBtn("d1"), smallBtn("d2"), smallBtn("d3"))}`)}
      ${panel("modify", "Modify", html`
        ${stack(smallBtn("move", "Move", true), smallBtn("copy", "Copy", true), smallBtn("stretch", "Stretch"))}
        ${stack(smallBtn("rotate", "Rotate"), smallBtn("mirror", "Mirror"), smallBtn("scale", "Scale"))}
        ${stack(smallBtn("array", "Array", true), smallBtn("trim", "Trim", true), smallBtn("fillet", "Fillet", true))}
        ${stack(smallBtn("erase"), smallBtn("box"), smallBtn("offset"))}`)}
      ${panel("layers", "Layers", html`
        <div class="lrow">${["layerA", "layerB", "layerC", "layerD", "layerE", "layerE", "layerF", "layerG"].map((n) => smallBtn(n))}</div>
        <div class="combo">${ico("bulb")}${ico("sun")}${ico("lock")}<i class="swatch"></i>
          <select aria-label="Layers"><option>DIM</option></select>${caret}</div>
        <div class="lrow left">${smallBtn("square", "", true)}${smallBtn("tolayer", "Move to Another Layer", true)}</div>`)}
      ${panel("anno", "Annotation", html`
        ${bigBtn("mtext", ["Multiline", "Text"], "side")}
        ${stack(smallBtn("dim", "Dimension", true), smallBtn("sym", "Symbol", true), smallBtn("bom", "BOM", true))}`, false)}
      ${panel("block", "Block", html`
        ${bigBtn("insert", ["Insert"])}
        ${stack(smallBtn("create", "Create"), smallBtn("edit", "Edit"), smallBtn("attr", "", true))}`)}
      ${panel("groups", "Groups", html`
        ${bigBtn("group", ["Group"], "none")}
        ${stack(smallBtn("g1"), smallBtn("g2"), smallBtn("g3", "", false, true))}`)}
      ${panel("utils", "Utilities", html`
        ${bigBtn("measure", ["Measure"])}
        ${stack(smallBtn("util1", "", true), smallBtn("magnet", "", true), smallBtn("calc"))}`)}
      ${panel("clip", "Clipboard", html`
        ${bigBtn("paste", ["Paste"])}
        ${stack(smallBtn("cut"), smallBtn("copyc"), smallBtn("match"))}`, false)}
      ${panel("view", "View", bigBtn("base", ["Base"]), true, true)}
    </div>`;
  }

  private renderHead() {
    return html`<header class="head">
      <button class="app" aria-label="A">
        <svg width="16" height="18" viewBox="0 0 16 18"><path d="M1 15L7 1h3l4 14h-3.500L9.500 11H6l-1.500 4z" fill="#c8252c"/><path d="M6.800 8.500h2L8 5z" fill="#6b1015"/><path d="M10 1l4 14h-3.500L8 5z" fill="#8e171d"/></svg>${caret}
      </button>
      <div class="titlebar">
        <div class="qat">
          ${["newf", "open", "save", "saveas", "print", "undo"].map((n) => smallBtn(n))}${caret}
          ${smallBtn("redo")}${caret}${smallBtn("pages")}${caret}${caret}
        </div>
        <h1 class="title"><span>AutoCAD Mechanical 2018</span><span>HỘP GIẢM TỐC BÁNH RĂNG CÔN.dwg</span></h1>
        <div class="info">
          <button class="go" aria-label="Search"><i class="rt"></i></button>
          <input aria-label="Search" placeholder="Type a keyword or phrase">
          ${smallBtn("binoc")}
          <button class="acct">${ico("user")}<span>Sign In</span></button>
          ${caret}${smallBtn("cart")}${smallBtn("exch")}${smallBtn("help")}${smallBtn("alert")}
        </div>
        <div class="wctl">
          ${["wmin", "wmax", "wclose"].map((n) => html`<button aria-label=${n}>${ico(n)}</button>`)}
        </div>
      </div>
      <nav class="tabs">
        ${this.tabs.map((t, i) => html`<button class=${i ? "" : "on"}>${t}</button>`)}
        <button class="cam" aria-label="Camera">${ico("camera")}${caret}</button>
      </nav>
    </header>`;
  }

  private renderCanvas() {
    return html`<main class="canvas">
      <span class="vp">[−][Top][2D Wireframe]</span>
      <div class="dctl">${["dmin", "drest", "dclose"].map((n) => html`<button aria-label=${n}>${ico(n)}</button>`)}</div>
      <cad-sheet class="s1"></cad-sheet>
      <cad-sheet class="s2"></cad-sheet>
      <svg class="cross" viewBox="0 0 49 49"><path d="M24.500 0v22M24.500 27v22M0 24.500h22M27 24.500h22M22.500 22.500h4v4h-4z" fill="none" stroke="#d8dadc"/></svg>
      <svg class="ucs" viewBox="0 0 56 54"><path d="M7.500 17v29.500h30" fill="none" stroke="#b4b8bb"/><text x="39" y="46">X</text><text x="8" y="14">Y</text></svg>
      <svg class="cube" viewBox="0 0 72 74">
        <circle cx="36" cy="37" r="28" fill="none" stroke="#454c55" stroke-width="6"/>
        <path d="M22 23h28v28H22z" fill="#a7abaf"/><path d="M28 29h16v16H28z" fill="#98a1a7"/>
        <text class="top" x="36" y="39">TOP</text>
        <text x="36" y="12">N</text><text x="36" y="70">S</text><text x="7" y="41">W</text><text x="65" y="41">E</text>
      </svg>
      <button class="ucsname">Unnamed ${caret}</button>
      <div class="cmd">
        <div class="tools"><i class="grip"></i>${ico("x")}${ico("wrench")}</div>
        ${ico("prompt")}${caret}
        <input aria-label="Command" placeholder="Type a command">
        <i class="caret flip"></i>
      </div>
    </main>`;
  }

  private renderStatus() {
    const items: [string, string, boolean][] = [
      ["snapL", "l", false], ["polar", "wide", true], ["iso", "wide", true], ["angle", "l", false], ["osnap", "wide", true],
      ["gear", "l wide", true], ["plus", "l", false], ["iso2", "l", false], ["blocks", "l", false], ["blocks2", "", false],
      ["lockb", "", false], ["perf", "l", false], ["hw", "l", false], ["menu", "l", false],
    ];
    return html`<footer>
      <div class="layouts"><button class="on">Model</button><button>Layout1</button><button>Layout2</button><button class="p" aria-label="Add">${ico("plus")}</button></div>
      <div class="status"><button class="model">MODEL</button>
        ${items.map(([n, c, a]) => html`<button class=${c} aria-label=${n}>${ico(n)}${a ? caret : nothing}</button>`)}
      </div>
    </footer>`;
  }

  render() {
    return html`
      <div class="window">
        ${this.renderHead()} ${this.renderRibbon()}
        <div class="files"><button class="a">Start</button><button class="b">HỘP GIẢM TỐC BÁNH RĂNG CÔN* ${ico("x")}</button><button class="p" aria-label="New">${ico("plus")}</button></div>
        <div class="rule"></div>
        ${this.renderCanvas()} ${this.renderStatus()}
      </div>
      <div class="taskbar">
        ${["start", "search", "tview", "edge", "folder", "store", "outlook"].map((n) => html`<button aria-label=${n}>${taskIco(n)}</button>`)}
        <button class="act" aria-label="AutoCAD">${taskIco("acad")}</button>
        <button class="run" aria-label="Paint">${taskIco("paint")}</button>
        <div class="tray">
          ${["up", "vkey", "batt", "wifi", "vol"].map((n) => html`<button class="ti" aria-label=${n}>${ico(n)}</button>`)}
          <div class="clock"><span>6:12 AM</span><span>11/23/2024</span></div>
          <button class="note" aria-label="Notifications">${taskIco("note")}<span class="badge">4</span></button>
        </div>
      </div>
      <svg class="logo" viewBox="0 0 111 30">
        <path d="M6 1h20l4 3h74q5 0 5 5v13q0 5-5 5H36q-2 2-6 2H5q-4 0-4-4V6q0-5 5-5z" fill="#fff"/>
        <path d="M4 4h10l2 2h14v20H4z" fill="#1ba2e0"/>
        <text x="4" y="22" fill="#fff">File</text>
        <text x="32" y="22" fill="#1ba2e0">Thiết Kế.vn</text>
      </svg>
      <div class="mark">Copyright © FileThietKe.vn</div>`;
  }
}
